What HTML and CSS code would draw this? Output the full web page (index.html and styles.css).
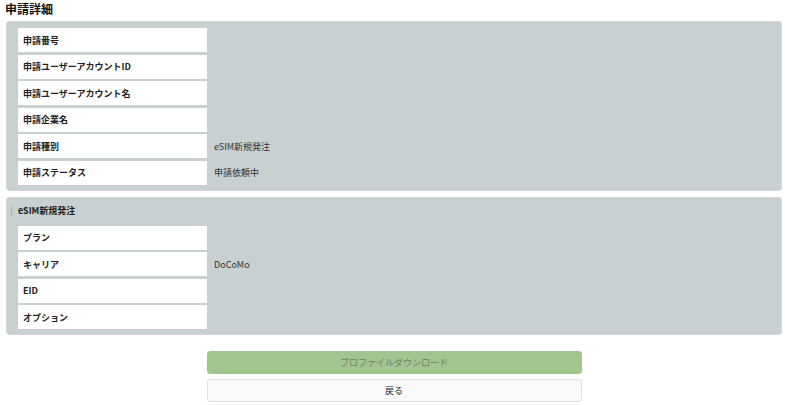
FILE: index.html
```html
<!DOCTYPE html>
<html lang="ja">

<head>
    <meta charset="UTF-8">
    <meta name="viewport" content="width=device-width, initial-scale=1.0">
    <title>申請詳細</title>
    <link rel="stylesheet" href="styles.css">
</head>

<body>
    <div class="wrap">
        <h1 class="page_title">申請詳細</h1>

        <!-- 申請の基本情報 -->
        <div class="panel">
            <dl class="detail">
                <div class="row"><dt>申請番号</dt><dd></dd></div>
                <div class="row"><dt>申請ユーザーアカウントID</dt><dd></dd></div>
                <div class="row"><dt>申請ユーザーアカウント名</dt><dd></dd></div>
                <div class="row"><dt>申請企業名</dt><dd></dd></div>
                <div class="row"><dt>申請種別</dt><dd>eSIM新規発注</dd></div>
                <div class="row"><dt>申請ステータス</dt><dd>申請依頼中</dd></div>
            </dl>
        </div>

        <!-- 発注内容 -->
        <div class="panel">
            <h2 class="panel_title">eSIM新規発注</h2>
            <dl class="detail">
                <div class="row"><dt>プラン</dt><dd></dd></div>
                <div class="row"><dt>キャリア</dt><dd>DoCoMo</dd></div>
                <div class="row"><dt>EID</dt><dd></dd></div>
                <div class="row"><dt>オプション</dt><dd></dd></div>
            </dl>
        </div>

        <div class="btns">
            <a href="javascript:;" class="btn btn_download">プロファイルダウンロード</a>
            <a href="javascript:;" class="btn btn_back">戻る</a>
        </div>
    </div>
</body>

</html>
```

FILE: styles.css
```css
* {
    margin: 0;
    padding: 0;
    box-sizing: border-box;
}

body {
    font-family: "Noto Sans CJK JP", "Noto Sans", sans-serif;
    color: #222;
    background: #fff;
}

body a {
    text-decoration: none;
}

.wrap {
    padding: 0 3px 0 6px;
}

.page_title {
    font-size: 12px;
    font-weight: bold;
    line-height: 18px;
    margin: 0 0 3px -1px;
    color: #111;
}

.panel {
    background: #c9d0d1;
    border: 1px solid #d3d9da;
    border-radius: 3px;
    padding: 6px 11px 5px;
    margin-bottom: 6px;
}

.panel_title {
    position: relative;
    font-size: 9px;
    font-weight: bold;
    line-height: 14px;
    padding: 0 0 8px;
    color: #222;
}

/* 見出し左の赤い線 */
.panel_title::before {
    content: "";
    position: absolute;
    left: -7px;
    top: 1px;
    width: 1px;
    height: 11px;
    background: #e59a9a;
}

.detail {
    display: flex;
    flex-direction: column;
    gap: 2.5px;
}

.detail .row {
    display: grid;
    grid-template-columns: 189px 1fr;
    height: 24px;
}

.detail dt {
    background: #fff;
    font-size: 9px;
    font-weight: bold;
    padding-left: 5px;
    display: flex;
    align-items: center;
}

.detail dd {
    font-size: 9px;
    padding-left: 7px;
    display: flex;
    align-items: center;
    color: #333;
}

.btns {
    width: 375px;
    margin: 16px auto 0;
    display: flex;
    flex-direction: column;
    gap: 5px;
}

.btn {
    display: block;
    height: 23px;
    line-height: 21px;
    text-align: center;
    font-size: 9px;
    border-radius: 3px;
    border: 1px solid transparent;
}

.btn_download {
    background: #a2c48f;
    border-color: #a2c48f;
    color: #6f7f66;
}

.btn_back {
    background: #f8f9fa;
    border-color: #dfe2e5;
    color: #222;
}
```
